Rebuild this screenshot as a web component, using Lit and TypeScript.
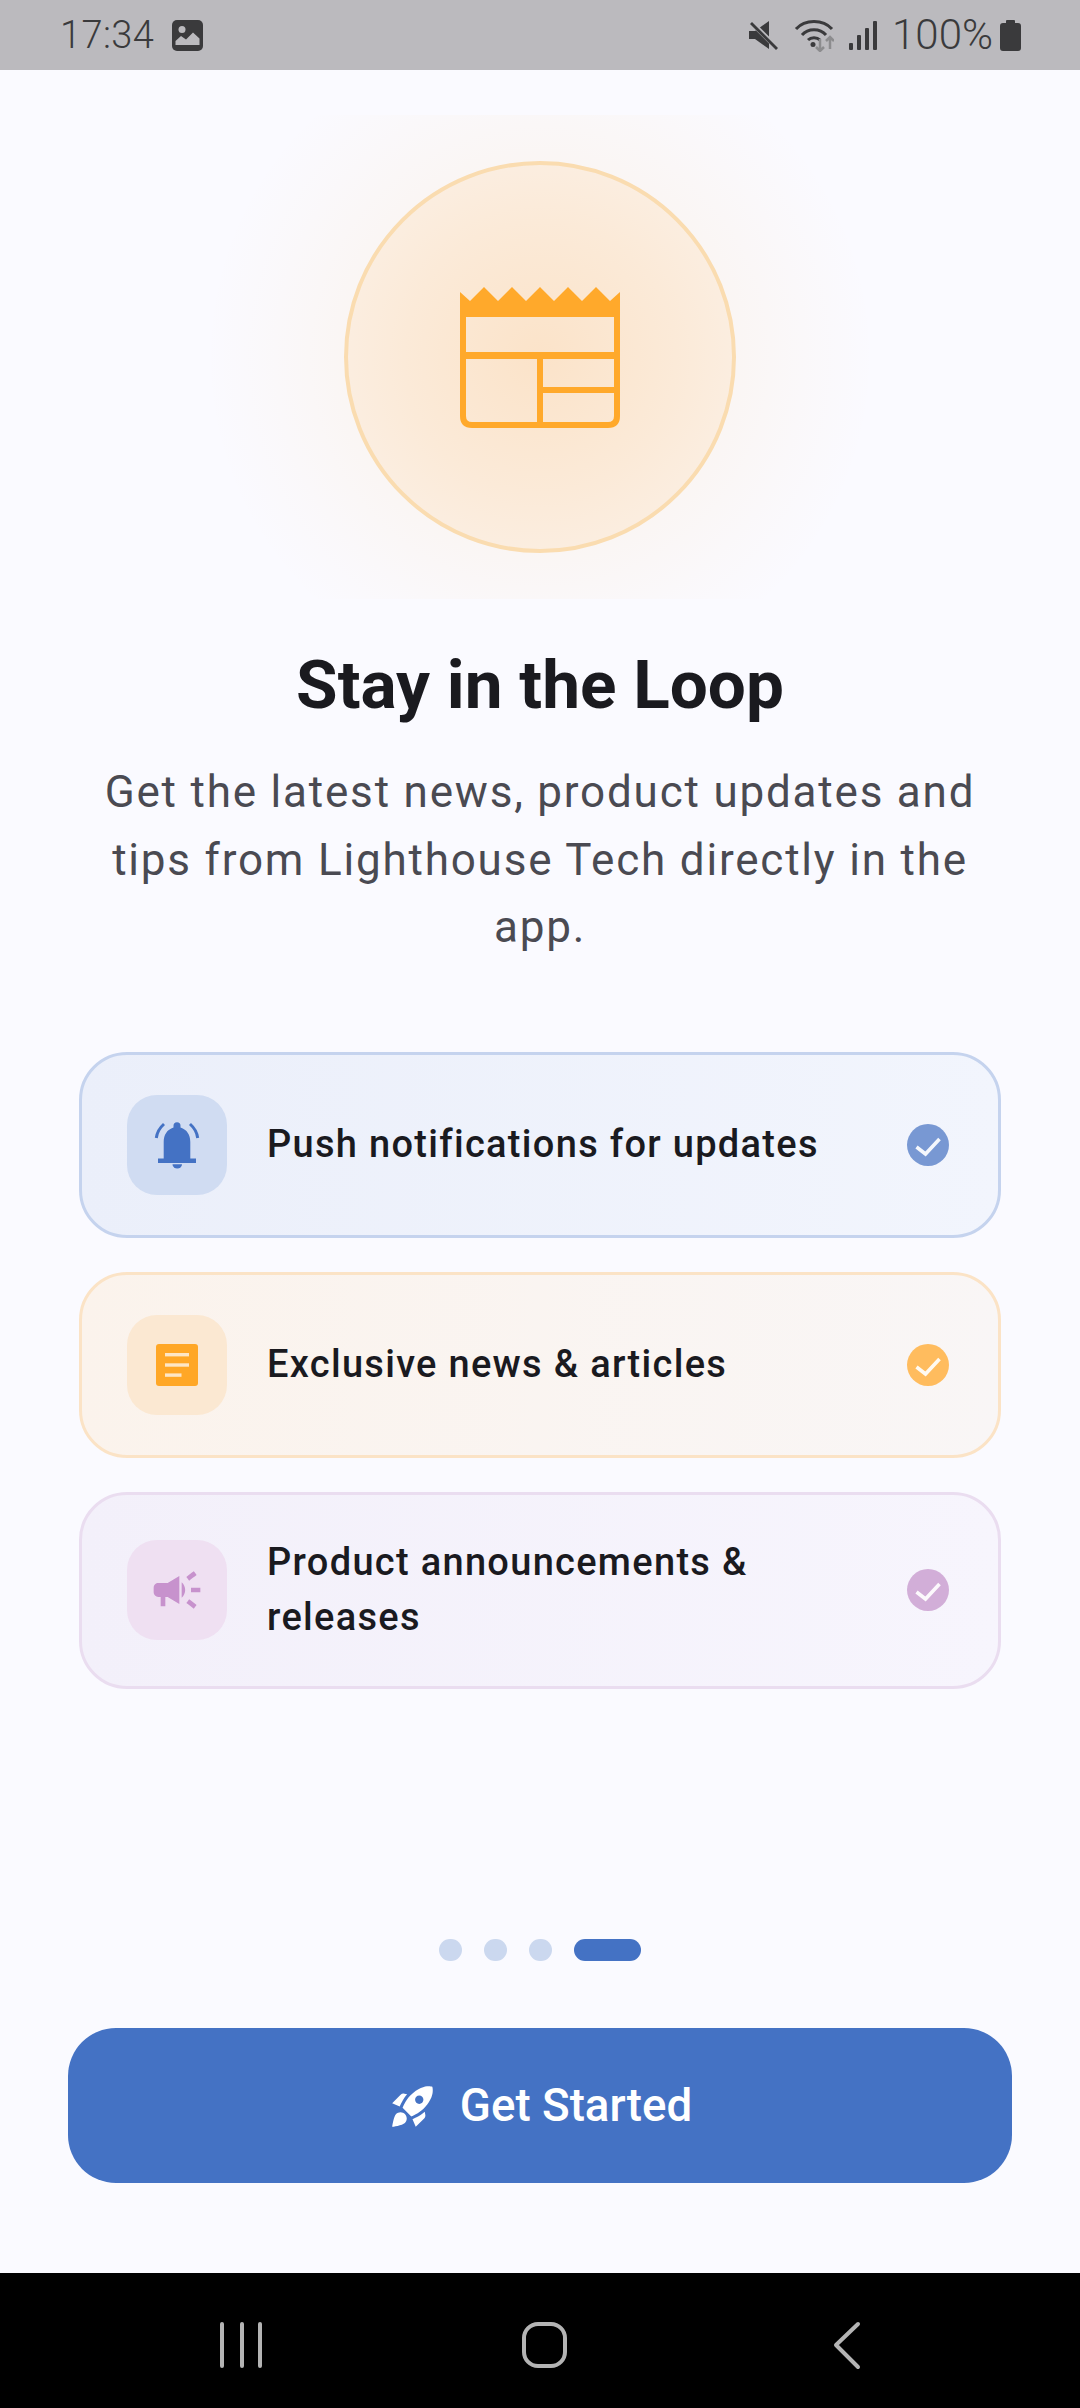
import { LitElement, html, css, svg } from "lit";
import { customElement } from "lit/decorators.js";

const newspaper = "M0 5 L10 14 L24 0 L38 14 L52 0 L66 14 L80 0 L94 14 L108 0 L122 14 L136 0 L150 14 L160 5 V129 Q160 141 148 141 H12 Q0 141 0 129 Z M6 30 V65 H154 V30 Z M6 72 V129 Q6 135 12 135 H77 V72 Z M83 72 V100 H154 V72 Z M83 106 V135 H148 Q154 135 154 129 V106 Z";
const rocket = "M9.19 6.35c-2.04 2.29-3.44 5.58-3.57 5.89L2 10.69l4.05-4.05c.47-.47 1.15-.68 1.81-.55l1.33.26zM11.17 17s3.74-1.55 5.89-3.7c5.4-5.4 4.5-9.62 4.21-10.57-.95-.3-5.17-1.19-10.57 4.21C8.55 9.09 7 12.83 7 12.83L11.17 17zM17.65 14.81c-2.29 2.04-5.58 3.44-5.89 3.57L13.31 22l4.05-4.05c.47-.47.68-1.15.55-1.81l-.26-1.33zM9 18c0 .83-.34 1.58-.88 2.12C6.94 21.3 2 22 2 22s.7-4.94 1.88-6.12C4.42 15.34 5.17 15 6 15c1.66 0 3 1.34 3 3zM13 9c0-1.1.9-2 2-2s2 .9 2 2-.9 2-2 2-2-.9-2-2z";
const campaign = "M18 11v2h4v-2h-4zm-2 6.61c.96.71 2.21 1.65 3.2 2.39.4-.53.8-1.07 1.2-1.6-.99-.74-2.24-1.68-3.2-2.4-.4.54-.8 1.08-1.2 1.61zM20.4 5.6c-.4-.53-.8-1.07-1.2-1.6-.99.74-2.24 1.68-3.2 2.4.4.53.8 1.07 1.2 1.6.96-.72 2.21-1.65 3.2-2.4zM4 9c-1.1 0-2 .9-2 2v2c0 1.1.9 2 2 2h1v4h2v-4h1l5 3V6L8 9H4zm11.5 3c0-1.33-.58-2.53-1.5-3.35v6.69c.92-.81 1.5-2.01 1.5-3.34z";

const bell = svg`<svg class="ic" viewBox="0 0 56 56" fill="#4472c4">
  <path d="M28 5.300a3.500 3.500 0 0 1 3.500 3.500V10.500C38 12.500 41.300 18 41.300 25V42H14.700V25C14.700 18 18 12.500 24.500 10.500V8.800a3.500 3.500 0 0 1 3.500-3.500Z"/>
  <rect x="9" y="41.500" width="38" height="4.500"/>
  <path d="M23.500 47.300h9.500a4.750 4.300 0 0 1-9.500 0Z"/>
  <path d="M7.300 21C8 15 10.500 11 15 7M48.700 21C48 15 45.500 11 41 7" fill="none" stroke="#4472c4" stroke-width="3" />
</svg>`;

const article = svg`<svg class="ic" viewBox="0 0 56 56">
  <rect x="7" y="7" width="42" height="42" rx="3" fill="#ffa726"/>
  <rect x="16" y="16" width="24" height="3.400" fill="#fde6c6"/>
  <rect x="16" y="26.300" width="24" height="3.400" fill="#fde6c6"/>
  <rect x="16" y="36.400" width="16.500" height="3.400" fill="#fde6c6"/>
</svg>`;

const megaphone = svg`<svg class="ic" viewBox="0 0 24 24" fill="#c792cd"><path d="${campaign}"/></svg>`;

const check = svg`<svg viewBox="0 0 42 42" width="42" height="42"><path d="M9.500 23 L18.500 30 L32.500 15" fill="none" stroke="#fff" stroke-opacity=".92" stroke-width="3.600"/></svg>`;

const items = [
  { cls: "blue", icon: bell, text: "Push notifications for updates" },
  { cls: "orange", icon: article, text: "Exclusive news & articles" },
  { cls: "purple", icon: megaphone, text: "Product announcements & releases" },
];

@customElement("app-root")
export class AppRoot extends LitElement {
  static styles = css`
    :host { display: block; width: 1080px; height: 2408px; font-family: Roboto, "Liberation Sans", sans-serif; background: #fafaff; color: #1a1a1f; }
    .page { display: flex; flex-direction: column; height: 100%; }
    .status { height: 70px; flex: none; background: #bbbabe; color: #3a3a3c; display: flex; align-items: center; justify-content: space-between; box-sizing: border-box; padding: 0 59px 0 60px; }
    .st-left, .st-right { display: flex; align-items: center; }
    .time { font-size: 38px; font-weight: 300; letter-spacing: 0.4px; line-height: 70px; }
    .img { margin-left: 18px; display: block; }
    .pct { font-size: 42px; font-weight: 300; line-height: 70px; margin: 0 7px 0 15px; }
    .st-right svg { display: block; }
    .wifi { margin-left: 14px; }
    .sig { margin-left: 15px; }
    main { flex: 1; display: flex; flex-direction: column; align-items: center; min-height: 0; }
    .hero { margin-top: 45px; width: 680px; height: 484px; flex: none; display: flex; align-items: center; justify-content: center; background: radial-gradient(circle 335px at center, rgba(255,167,38,.075) 0%, rgba(255,167,38,.05) 58%, rgba(255,167,38,.018) 82%, rgba(255,167,38,0) 100%); }
    .circle { width: 392px; height: 392px; box-sizing: border-box; border-radius: 50%; border: 4px solid #fadcb0; display: flex; align-items: center; justify-content: center; background: radial-gradient(circle at center, #fbe3c9 0%, #fbead8 50%, #fbf2ea 100%); }
    .circle svg { display: block; width: 160px; height: 141px; }
    h1 { margin: 50px 0 0; font-size: 67.500px; line-height: 72px; font-weight: 700; letter-spacing: 0; color: #1a1a1f; text-align: center; }
    .sub { margin: 38px 0 0; width: 900px; font-size: 44px; line-height: 67.500px; letter-spacing: 1.800px; color: #4a4a52; text-align: center; }
    .cards { margin-top: 90px; width: 922px; display: flex; flex-direction: column; gap: 34px; }
    .card { display: flex; align-items: center; box-sizing: border-box; border-width: 3px; border-style: solid; border-radius: 48px; padding: 40px 49px 40px 45px; }
    .card.blue { border-color: #c5d3ee; background: linear-gradient(90deg, #ebeffa, #f2f5fd); }
    .card.orange { border-color: #fbe3c6; background: linear-gradient(90deg, #fbf3ec, #f9f6f6); }
    .card.purple { border-color: #eaddf0; background: linear-gradient(90deg, #f3f0fa, #f7f5fd); }
    .tile { width: 100px; height: 100px; border-radius: 30px; flex: none; display: flex; align-items: center; justify-content: center; }
    .blue .tile { background: #d0dcf2; }
    .orange .tile { background: #fbe8d2; }
    .purple .tile { background: #efe0f2; }
    .ic { width: 56px; height: 56px; display: block; }
    .label { flex: 1; margin-left: 40px; font-size: 38px; line-height: 55.500px; font-weight: 500; letter-spacing: 1.300px; color: #1a1a1f; padding-right: 30px; }
    .tick { width: 42px; height: 42px; border-radius: 50%; flex: none; }
    .tick svg { display: block; }
    .blue .tick { background: #7898d3; }
    .orange .tick { background: #ffbc5e; }
    .purple .tick { background: #d2aed8; }
    .spacer { flex: 1; }
    .dots { display: flex; gap: 22.500px; }
    .dot { width: 22.500px; height: 22.500px; border-radius: 12px; background: #cbd8ef; }
    .dot.on { width: 67px; background: #4472c4; }
    .btn { margin: 67px 0 90px; width: 944px; height: 155px; flex: none; border-radius: 48px; background: #4472c4; color: #fff; display: flex; align-items: center; justify-content: center; gap: 22px; font-size: 45.700px; font-weight: 500; }
    .btn svg { width: 50px; height: 50px; display: block; fill: #fff; }
    .nav { height: 135px; flex: none; background: #000; display: block; }
    .nav svg { display: block; }
  `;

  render() {
    return html`<div class="page">
      <div class="status">
        <div class="st-left">
          <span class="time">17:34</span>
          <svg class="img" width="31" height="31" viewBox="0 0 31 31">
            <rect width="31" height="31" rx="5" fill="#3a3a3c"/>
            <circle cx="10" cy="9.500" r="3.500" fill="#bbbabe"/>
            <path d="M3.500 25 V21 L9 16 L14 19.500 L21 12.500 L27.500 18.500 V25 Z" fill="#bbbabe"/>
            <rect x="3.500" y="25" width="24" height="2.500" fill="#3a3a3c"/>
          </svg>
        </div>
        <div class="st-right">
          <svg width="32" height="30" viewBox="0 0 30 30">
            <path d="M0 11 H6 L20 1 V29 L6 19 H0 Z" fill="#3a3a3c"/>
            <path d="M2 2 L29 29" stroke="#bbbabe" stroke-width="5"/>
            <path d="M2 3 L28 29" stroke="#3a3a3c" stroke-width="2.800"/>
          </svg>
          <svg class="wifi" width="40" height="34" viewBox="0 0 40 34">
            <g fill="none" stroke="#3a3a3c" stroke-width="3">
              <path d="M2 11 C11 1 29 1 38 11"/>
              <path d="M8 17 C14 10 26 10 32 17"/>
              <path d="M14 22 C17 19 23 19 26 22"/>
            </g>
            <circle cx="19" cy="26.500" r="2.500" fill="#3a3a3c"/>
            <g fill="none" stroke="#8c8c8e" stroke-width="2.500">
              <path d="M29 20 V32 M25 28 L29 32 L33 28" transform="translate(-3 1)"/>
              <path d="M36 31 V19 M32 23 L36 19 L40 23"/>
            </g>
          </svg>
          <svg class="sig" width="28" height="30" viewBox="0 0 28 30" fill="#3a3a3c">
            <rect x="0" y="23" width="4" height="7" rx="1"/>
            <rect x="8" y="15" width="4" height="15" rx="1"/>
            <rect x="16" y="8" width="4" height="22" rx="1"/>
            <rect x="24" y="1" width="4" height="29" rx="1"/>
          </svg>
          <span class="pct">100%</span>
          <svg width="21" height="31" viewBox="0 0 21 31" fill="#3a3a3c">
            <path d="M6 3 V1 Q6 0 7 0 H14 Q15 0 15 1 V3 H18 Q21 3 21 6 V28 Q21 31 18 31 H3 Q0 31 0 28 V6 Q0 3 3 3 Z"/>
          </svg>
        </div>
      </div>
      <main>
        <div class="hero">
          <div class="circle">
            <svg viewBox="0 0 160 141"><path fill="#ffa92b" fill-rule="evenodd" d="${newspaper}"/></svg>
          </div>
        </div>
        <h1>Stay in the Loop</h1>
        <p class="sub">Get the latest news, product updates and tips from Lighthouse Tech directly in the app.</p>
        <div class="cards">
          ${items.map(i => html`<div class="card ${i.cls}">
            <div class="tile">${i.icon}</div>
            <div class="label">${i.text}</div>
            <div class="tick">${check}</div>
          </div>`)}
        </div>
        <div class="spacer"></div>
        <div class="dots"><div class="dot"></div><div class="dot"></div><div class="dot"></div><div class="dot on"></div></div>
        <div class="btn">
          <svg viewBox="0 0 24 24"><path fill-rule="evenodd" d="${rocket}"/></svg>
          <span>Get Started</span>
        </div>
      </main>
      <div class="nav">
        <svg width="1080" height="135" viewBox="0 0 1080 135">
          <g fill="none" stroke="#b4b4b4" stroke-width="4" stroke-linecap="round" stroke-linejoin="round">
            <path d="M222 51 V93 M242 51 V93 M260 51 V93"/>
            <rect x="524" y="51" width="41" height="42" rx="14"/>
            <path d="M858 51 L836 72 L858 94"/>
          </g>
        </svg>
      </div>
    </div>`;
  }
}
